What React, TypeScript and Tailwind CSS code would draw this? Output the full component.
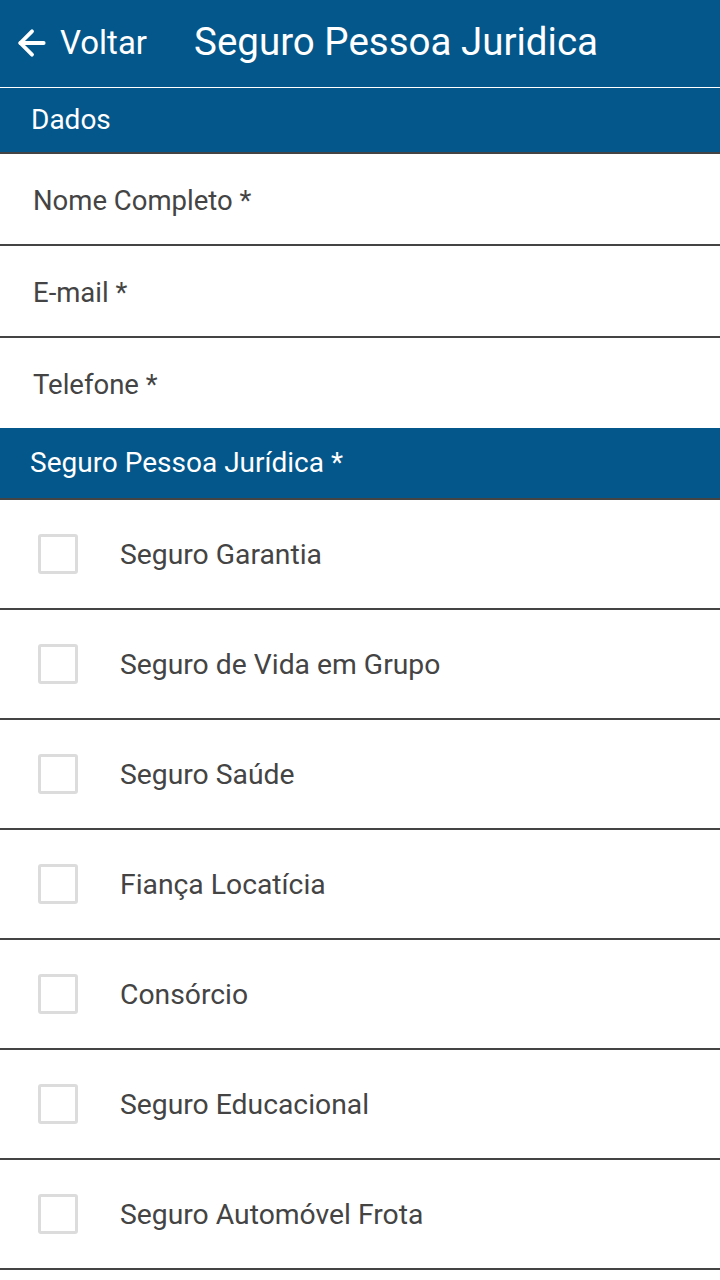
import { ArrowLeft } from "lucide-react";

const fields = ["Nome Completo *", "E-mail *", "Telefone *"];

const options = [
  "Seguro Garantia",
  "Seguro de Vida em Grupo",
  "Seguro Saúde",
  "Fiança Locatícia",
  "Consórcio",
  "Seguro Educacional",
  "Seguro Automóvel Frota",
];

export default function App() {
  return (
    <div className="w-[720px] min-h-[1280px] bg-white font-['Roboto',sans-serif]">
      {/* Top bar */}
      <div className="flex h-[87px] items-center bg-[#04578a] pb-[2px] text-white">
        <div className="flex items-center pl-[12px]">
          <ArrowLeft className="h-[40px] w-[40px]" strokeWidth={2.3} />
          <span className="ml-[8px] text-[33px] leading-none">Voltar</span>
        </div>
        <h1 className="ml-[47px] text-[38.5px] leading-none">Seguro Pessoa Juridica</h1>
      </div>
      <div className="h-px bg-white" />

      <div className="flex h-[66px] items-center border-b-2 border-[#444] bg-[#04578a] pl-[31px] text-[28px] text-white">
        Dados
      </div>

      {fields.map((f, i) => (
        <div
          key={f}
          className={`flex items-center pl-[33px] pt-[3px] text-[27.5px] text-[#444] ${
            i < fields.length - 1 ? "h-[92px] border-b-2 border-[#444]" : "h-[90px]"
          }`}
        >
          {f}
        </div>
      ))}

      <div className="flex h-[72px] items-center border-b-2 border-[#444] bg-[#04578a] pl-[30px] text-[28px] text-white">
        Seguro Pessoa Jurídica *
      </div>

      {options.map((o) => (
        <div key={o} className="flex h-[110px] items-center border-b-2 border-[#444]">
          <div className="ml-[38px] h-[40px] w-[40px] rounded-[3px] border-[3px] border-[#dcdcdc]" />
          <span className="ml-[42px] pt-[2px] text-[28.3px] text-[#444]">{o}</span>
        </div>
      ))}
    </div>
  );
}
